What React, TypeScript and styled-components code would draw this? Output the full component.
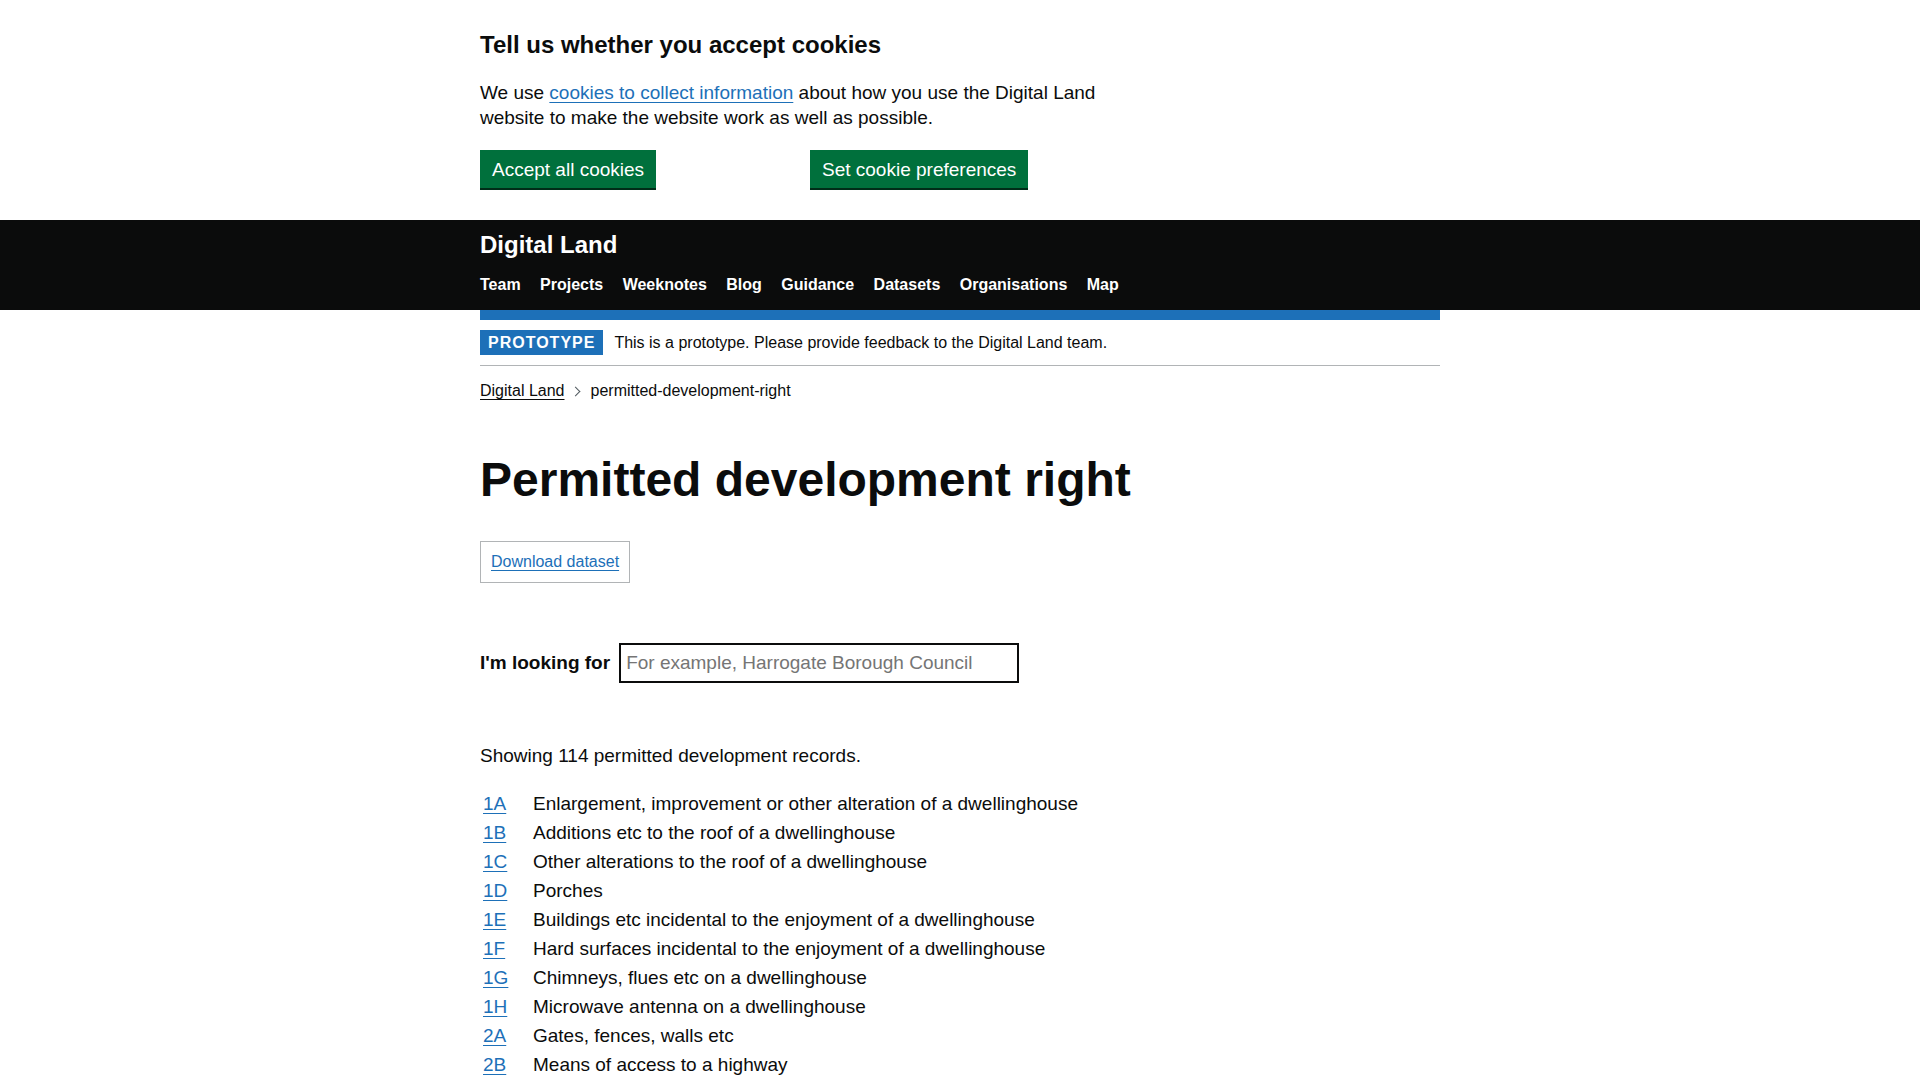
import React from "react";
import styled, { createGlobalStyle } from "styled-components";

const GlobalStyle = createGlobalStyle`
  html, body {
    margin: 0;
    padding: 0;
    background: #ffffff;
  }
  body {
    font-family: "Liberation Sans", Arial, Helvetica, sans-serif;
    color: #0b0c0c;
    -webkit-font-smoothing: antialiased;
  }
  * { box-sizing: border-box; }
`;

const Container = styled.div`
  width: 960px;
  margin: 0 auto;
`;

/* Cookie banner */
const CookieBanner = styled.section`
  background: #ffffff;
  padding: 30px 0 32px;
`;

const CookieHeading = styled.h2`
  font-size: 24px;
  line-height: 30px;
  font-weight: 700;
  margin: 0 0 20px;
`;

const CookieText = styled.p`
  font-size: 19px;
  line-height: 25px;
  max-width: 630px;
  margin: 0 0 20px;
`;

const Link = styled.a`
  color: #1d70b8;
  text-decoration: underline;
  text-underline-offset: 0.1578em;
  text-decoration-thickness: 1px;
`;

const ButtonRow = styled.div`
  display: flex;
`;

const ButtonCell = styled.div`
  width: 330px;
`;

const GreenButton = styled.button`
  display: inline-block;
  font-family: inherit;
  font-size: 19px;
  line-height: 19px;
  padding: 8px 10px 7px;
  border: 2px solid transparent;
  border-radius: 0;
  background: #00703c;
  color: #ffffff;
  box-shadow: 0 2px 0 #002d18;
  cursor: pointer;
  margin: 0;
`;

/* Header */
const Header = styled.header`
  background: #0b0c0c;
  padding: 10px 0 5px;
`;

const Logo = styled.a`
  display: block;
  font-size: 24px;
  line-height: 30px;
  font-weight: 700;
  color: #ffffff;
  text-decoration: none;
`;

const NavList = styled.ul`
  display: flex;
  list-style: none;
  margin: 5px 0 0;
  padding: 0;
`;

const NavItem = styled.li`
  padding: 10px 0;
  margin-right: 19.45px;
`;

const NavLink = styled.a`
  font-size: 16px;
  line-height: 20px;
  font-weight: 700;
  color: #ffffff;
  text-decoration: none;
`;

const BlueBar = styled.div`
  width: 960px;
  height: 10px;
  margin: 0 auto;
  background: #1d70b8;
`;

/* Phase banner */
const PhaseBanner = styled.div`
  display: flex;
  align-items: center;
  padding: 10px 0;
  border-bottom: 1px solid #b1b4b6;
`;

const Tag = styled.strong`
  display: inline-block;
  font-size: 16px;
  line-height: 16px;
  font-weight: 700;
  letter-spacing: 1px;
  text-transform: uppercase;
  padding: 5px 8px 4px;
  background: #1d70b8;
  color: #ffffff;
  margin-right: 11px;
`;

const PhaseText = styled.span`
  font-size: 16px;
  line-height: 20px;
`;

/* Breadcrumbs */
const Breadcrumbs = styled.ol`
  display: flex;
  align-items: center;
  list-style: none;
  margin: 15px 0 0;
  padding: 0;
  font-size: 16px;
  line-height: 20px;
`;

const Crumb = styled.li`
  display: flex;
  align-items: center;
`;

const CrumbLink = styled.a`
  color: #0b0c0c;
  text-decoration: underline;
  text-underline-offset: 0.1578em;
  text-decoration-thickness: 1px;
`;

const Chevron = styled.span`
  display: inline-block;
  width: 7px;
  height: 7px;
  border-top: 1px solid #505a5f;
  border-right: 1px solid #505a5f;
  transform: rotate(45deg);
  margin: 0 12px 0 7px;
`;

/* Main */
const PageTitle = styled.h1`
  font-size: 48px;
  line-height: 50px;
  font-weight: 700;
  margin: 54px 0 36px;
`;

const DownloadBox = styled.div`
  display: inline-block;
  border: 1px solid #b1b4b6;
  padding: 10px;
  font-size: 16px;
  line-height: 20px;
  margin-bottom: 60px;
`;

const SearchForm = styled.form`
  display: flex;
  align-items: center;
  margin: 0 0 60px;
`;

const SearchLabel = styled.label`
  font-size: 19px;
  line-height: 25px;
  font-weight: 700;
  margin-right: 9px;
  margin-top: -1px;
`;

const SearchInput = styled.input`
  width: 400px;
  height: 40px;
  padding: 5px;
  border: 2px solid #0b0c0c;
  border-radius: 0;
  font-family: inherit;
  font-size: 19px;
  line-height: 25px;
  color: #0b0c0c;
  &::placeholder {
    color: #757575;
    opacity: 1;
  }
`;

const Summary = styled.p`
  font-size: 19px;
  line-height: 25px;
  margin: 0 0 20px;
`;

const RecordTable = styled.table`
  border-spacing: 2px;
  font-size: 19px;
  line-height: 25px;
`;

const Cell = styled.td<{ $narrow?: boolean }>`
  padding: 1px;
  vertical-align: top;
  width: ${(p) => (p.$narrow ? "48px" : "auto")};
`;

const records: [string, string][] = [
  ["1A", "Enlargement, improvement or other alteration of a dwellinghouse"],
  ["1B", "Additions etc to the roof of a dwellinghouse"],
  ["1C", "Other alterations to the roof of a dwellinghouse"],
  ["1D", "Porches"],
  ["1E", "Buildings etc incidental to the enjoyment of a dwellinghouse"],
  ["1F", "Hard surfaces incidental to the enjoyment of a dwellinghouse"],
  ["1G", "Chimneys, flues etc on a dwellinghouse"],
  ["1H", "Microwave antenna on a dwellinghouse"],
  ["2A", "Gates, fences, walls etc"],
  ["2B", "Means of access to a highway"],
];

const navItems = [
  "Team",
  "Projects",
  "Weeknotes",
  "Blog",
  "Guidance",
  "Datasets",
  "Organisations",
  "Map",
];

export default function App() {
  return (
    <>
      <GlobalStyle />
      <CookieBanner aria-label="Cookies on Digital Land">
        <Container>
          <CookieHeading>Tell us whether you accept cookies</CookieHeading>
          <CookieText>
            We use <Link href="#">cookies to collect information</Link> about
            how you use the Digital Land website to make the website work as
            well as possible.
          </CookieText>
          <ButtonRow>
            <ButtonCell>
              <GreenButton type="button">Accept all cookies</GreenButton>
            </ButtonCell>
            <ButtonCell>
              <GreenButton type="button">Set cookie preferences</GreenButton>
            </ButtonCell>
          </ButtonRow>
        </Container>
      </CookieBanner>

      <Header>
        <Container>
          <Logo href="#">Digital Land</Logo>
          <nav>
            <NavList>
              {navItems.map((n) => (
                <NavItem key={n}>
                  <NavLink href="#">{n}</NavLink>
                </NavItem>
              ))}
            </NavList>
          </nav>
        </Container>
      </Header>
      <BlueBar />

      <Container>
        <PhaseBanner>
          <Tag>Prototype</Tag>
          <PhaseText>
            This is a prototype. Please provide feedback to the Digital Land
            team.
          </PhaseText>
        </PhaseBanner>

        <Breadcrumbs>
          <Crumb>
            <CrumbLink href="#">Digital Land</CrumbLink>
          </Crumb>
          <Crumb>
            <Chevron aria-hidden="true" />
            permitted-development-right
          </Crumb>
        </Breadcrumbs>

        <main>
          <PageTitle>Permitted development right</PageTitle>

          <div>
            <DownloadBox>
              <Link href="#">Download dataset</Link>
            </DownloadBox>
          </div>

          <SearchForm onSubmit={(e) => e.preventDefault()}>
            <SearchLabel htmlFor="filter">I'm looking for</SearchLabel>
            <SearchInput
              id="filter"
              type="text"
              placeholder="For example, Harrogate Borough Council"
            />
          </SearchForm>

          <Summary>Showing 114 permitted development records.</Summary>

          <RecordTable>
            <tbody>
              {records.map(([code, name]) => (
                <tr key={code}>
                  <Cell $narrow>
                    <Link href="#">{code}</Link>
                  </Cell>
                  <Cell>{name}</Cell>
                </tr>
              ))}
            </tbody>
          </RecordTable>
        </main>
      </Container>
    </>
  );
}
